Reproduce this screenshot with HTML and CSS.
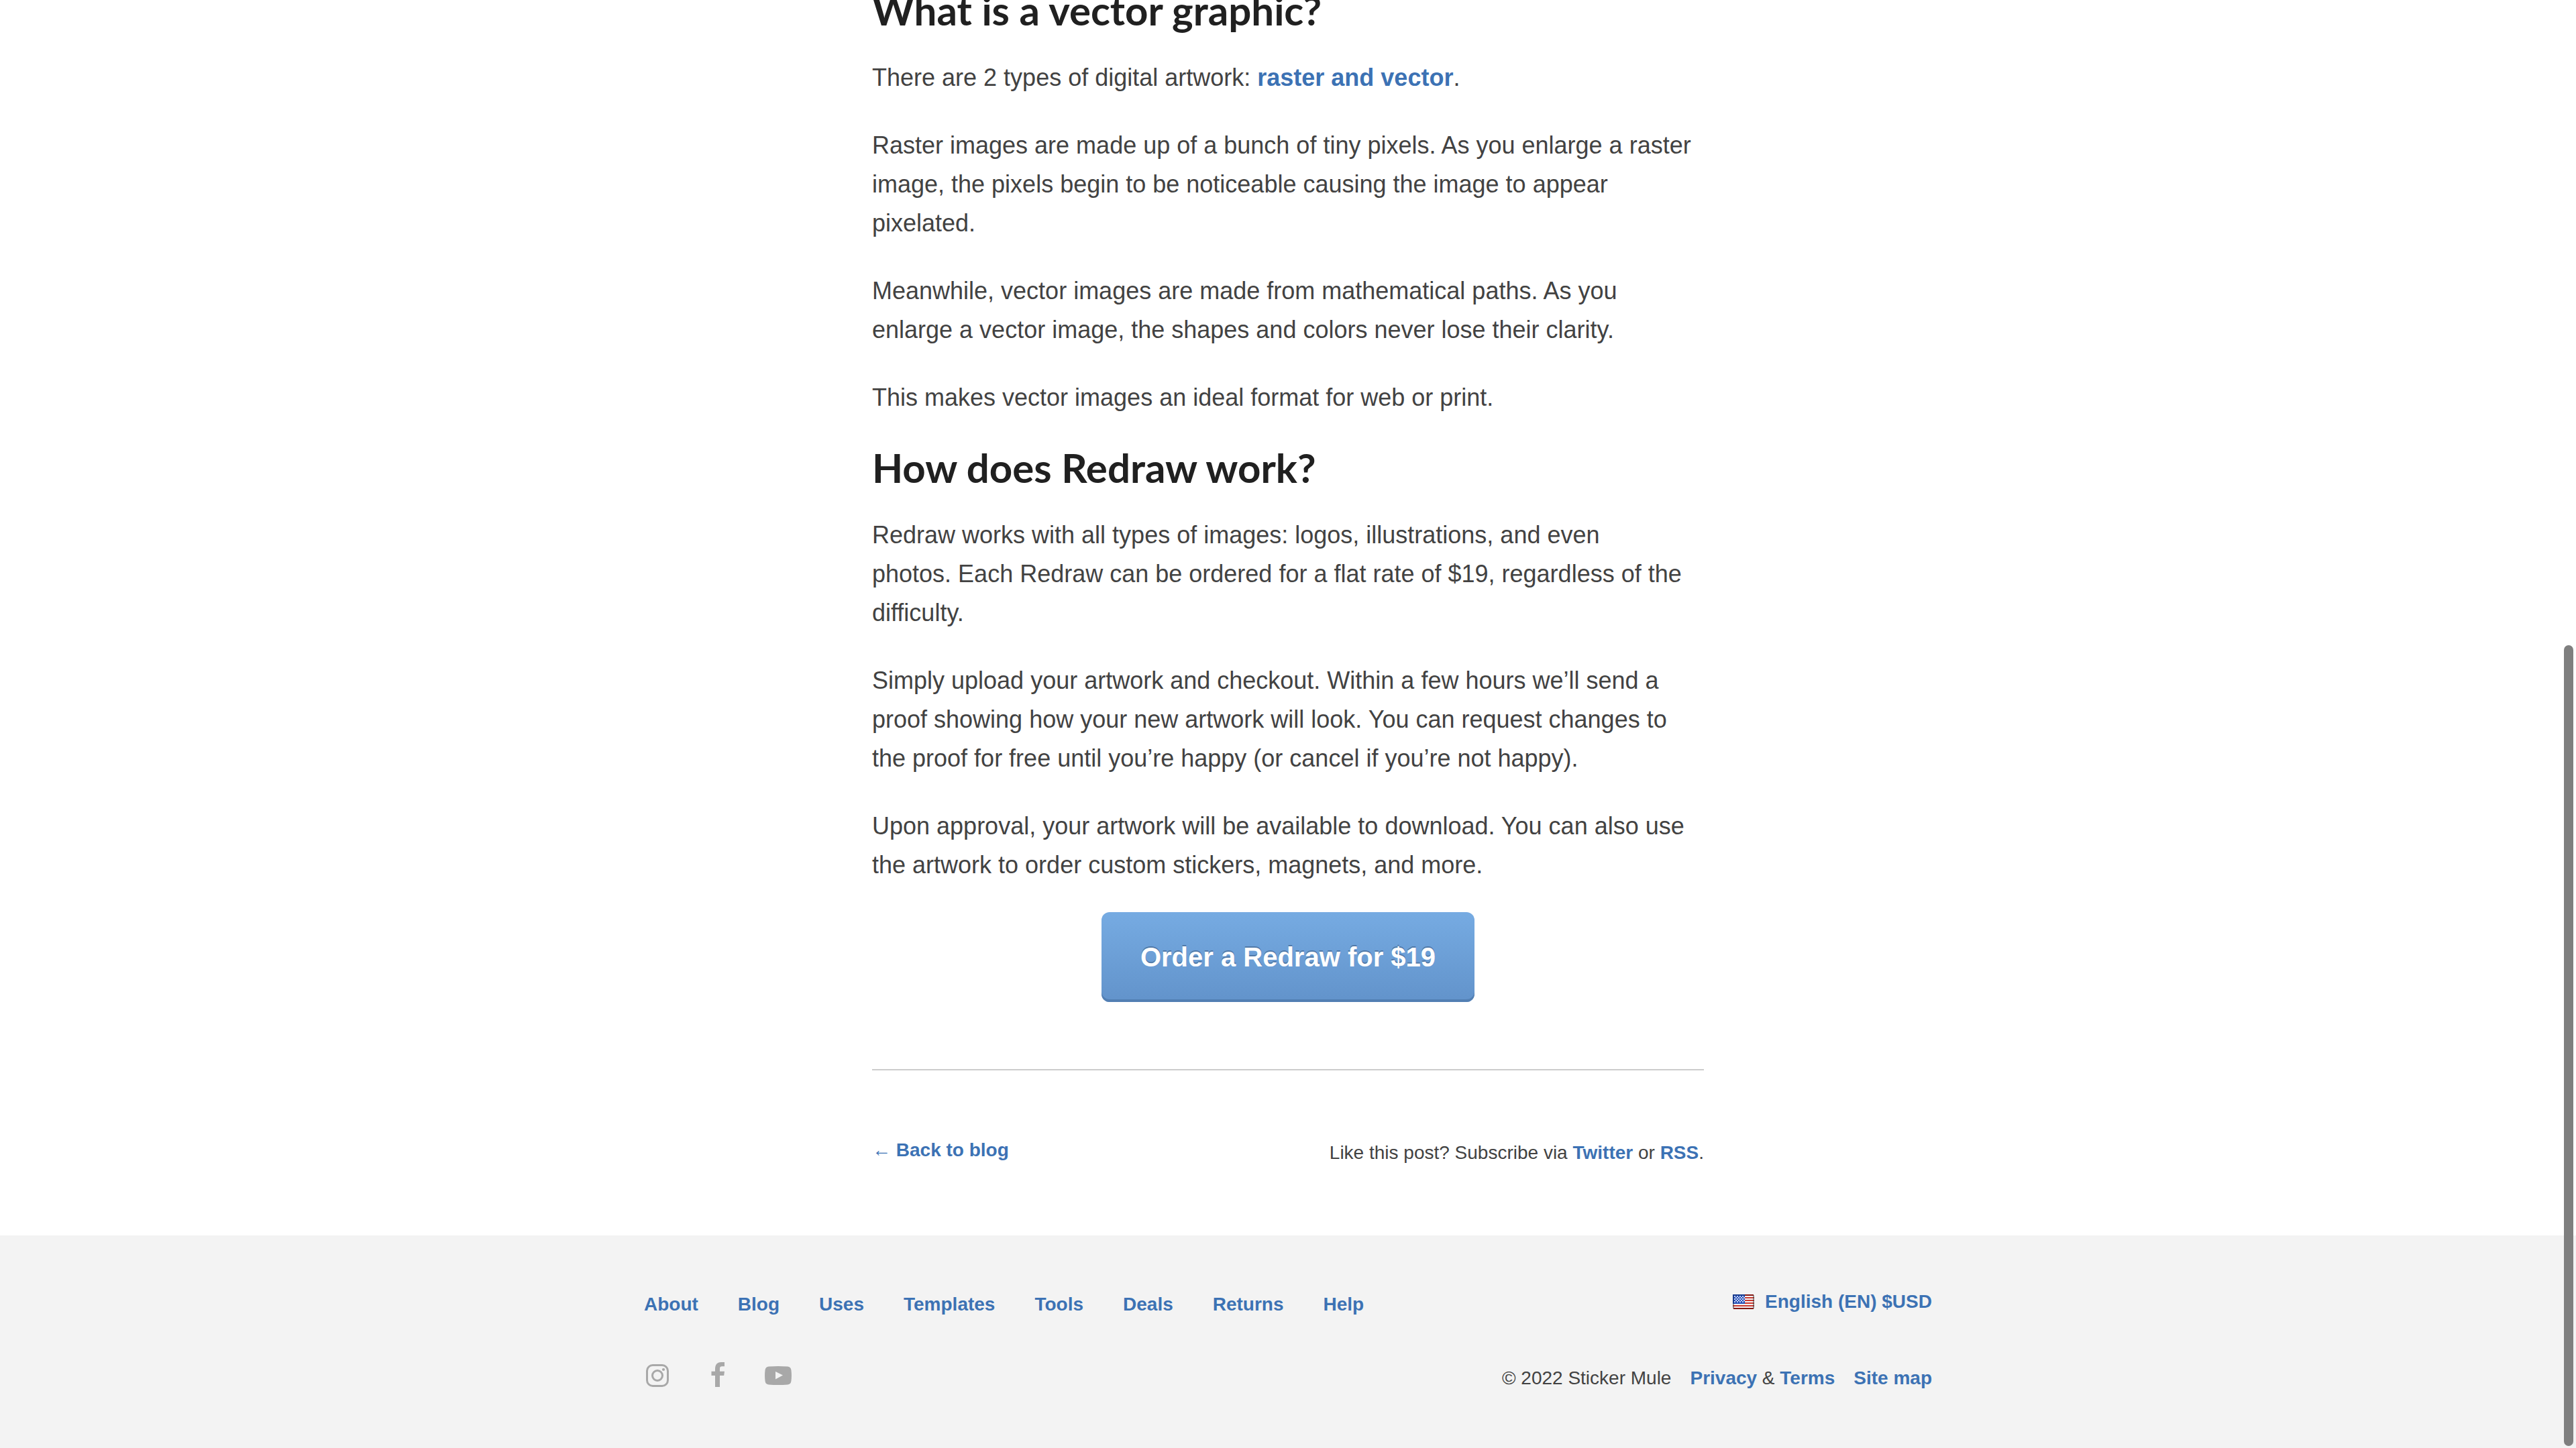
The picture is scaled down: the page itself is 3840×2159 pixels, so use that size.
FILE: index.html
```html
<!DOCTYPE html>
<html lang="en">
<head>
<meta charset="utf-8">
<meta name="viewport" content="width=device-width, initial-scale=1">
<title>What is a vector graphic? | Sticker Mule</title>
<link rel="stylesheet" href="styles.css">
</head>
<body>
<main class="article">
  <h2 class="heading">What is a vector graphic?</h2>
  <div class="prose">
    <p>There are 2 types of digital artwork: <a href="#">raster and vector</a>.</p>
    <p>Raster images are made up of a bunch of tiny pixels. As you enlarge a raster<br>image, the pixels begin to be noticeable causing the image to appear<br>pixelated.</p>
    <p>Meanwhile, vector images are made from mathematical paths. As you<br>enlarge a vector image, the shapes and colors never lose their clarity.</p>
    <p>This makes vector images an ideal format for web or print.</p>
  </div>
  <h2 class="heading">How does Redraw work?</h2>
  <div class="prose">
    <p>Redraw works with all types of images: logos, illustrations, and even<br>photos. Each Redraw can be ordered for a flat rate of $19, regardless of the<br>difficulty.</p>
    <p>Simply upload your artwork and checkout. Within a few hours we’ll send a<br>proof showing how your new artwork will look. You can request changes to<br>the proof for free until you’re happy (or cancel if you’re not happy).</p>
    <p>Upon approval, your artwork will be available to download. You can also use<br>the artwork to order custom stickers, magnets, and more.</p>
  </div>
  <button class="order" type="button">Order a Redraw for $19</button>
  <div class="article-end">
    <a class="back" href="#"><span class="arrow">←</span> Back to blog</a>
    <p class="subscribe">Like this post? Subscribe via <a href="#">Twitter</a> or <a href="#">RSS</a>.</p>
  </div>
</main>
<footer class="footer">
  <div class="footer-inner">
    <div class="footer-row">
      <nav class="links">
        <a href="#">About</a>
        <a href="#">Blog</a>
        <a href="#">Uses</a>
        <a href="#">Templates</a>
        <a href="#">Tools</a>
        <a href="#">Deals</a>
        <a href="#">Returns</a>
        <a href="#">Help</a>
      </nav>
      <button class="language" type="button">
        <svg class="flag" viewBox="0 0 32 22" aria-hidden="true">
          <rect width="32" height="22" rx="1" fill="#f4f2f4"/>
          <path d="M18 5h14M18 9h14M18 13h14M0 17h32" stroke="#cb3a2f" stroke-width="2"/>
          <rect width="18" height="14" fill="#2450b8"/>
          <path d="M2 3h16M4 5h14M2 7h16M4 9h14M2 11h16" stroke="#c5d0f0" stroke-width="2" stroke-dasharray="2 2"/>
          <path d="M1 1v20M31 1v20" stroke="#333" stroke-opacity=".5" stroke-width="2"/>
          <path d="M1 1h30M1 21h30" stroke="#831812" stroke-width="2"/>
          <path d="M1 14V1h17" fill="none" stroke="#173a8c" stroke-width="2"/>
        </svg>
        English (EN) $USD
      </button>
    </div>
    <div class="footer-row">
      <div class="social">
        <a href="#" aria-label="Instagram">
          <svg width="40" height="40" viewBox="0 0 40 40"><rect x="4.500" y="4.500" width="31" height="31" rx="8.500" fill="none" stroke="currentColor" stroke-width="3"/><circle cx="20" cy="20" r="7.500" fill="none" stroke="currentColor" stroke-width="3"/><circle cx="29" cy="11" r="2.100" fill="currentColor"/></svg>
        </a>
        <a href="#" aria-label="Facebook">
          <svg width="40" height="40" viewBox="0 0 40 40"><path d="M16 37V20h-5.500v-6.300H16V9.500C16 3.500 19.500 0 25 0h5v6.200h-3.500c-2.600 0-3.500 1.100-3.500 3.500v4h7L29.200 20H23v17z" fill="currentColor"/></svg>
        </a>
        <a href="#" aria-label="YouTube">
          <svg width="40" height="40" viewBox="0 0 40 40"><path fill-rule="evenodd" d="M6 6.500Q20 5.500 34 6.500 38.700 7 39.400 11.500 40.500 20 39.400 28.500 38.700 33 34 33.500 20 34.500 6 33.500 1.300 33 .6 28.500-.5 20 .6 11.500 1.300 7 6 6.500zM16 14v11.500L27 19.500z" fill="currentColor"/></svg>
        </a>
      </div>
      <div class="legal">
        <span>© 2022 Sticker Mule</span>
        <span><a href="#">Privacy</a> &amp; <a href="#">Terms</a></span>
        <a href="#">Site map</a>
      </div>
    </div>
  </div>
</footer>
<div class="scroll-thumb"></div>
</body>
</html>
```
FILE: styles.css
```css
* {
  box-sizing: border-box;
}

body {
  display: flex;
  flex-direction: column;
  min-height: 100vh;
  margin: 0;
  overflow: hidden;
  background: #fff;
  color: #424242;
  font: 28px/44px "Helvetica Neue", "Liberation Sans", Arial, sans-serif;
}

a {
  color: #3c72b4;
  font-weight: bold;
  text-decoration: none;
}

p,
h2 {
  margin: 0;
}

.article {
  display: flex;
  flex-direction: column;
  width: 100%;
  max-width: 1240px;
  margin: -23px auto 0;
}

.heading {
  margin-bottom: 34px;
  color: #202020;
  font: bold 60px/76px "Proxima Nova", Lato, sans-serif;
}

.prose {
  display: flex;
  flex-direction: column;
  gap: 43px;
  font-size: 36px;
  line-height: 58px;
  white-space: nowrap;
}

.prose + .heading {
  margin-top: 37px;
}

.order {
  align-self: center;
  width: 556px;
  height: 134px;
  margin-top: 41px;
  padding: 0;
  border: 0;
  border-radius: 12px;
  background: linear-gradient(#76abe2, #6293cb);
  box-shadow: inset 0 -4px #527fb3;
  color: #fff;
  font: bold 40px/60px "Helvetica Neue", "Liberation Sans", Arial, sans-serif;
  text-shadow: 0 -2px #5079a8;
}

.article-end {
  display: flex;
  justify-content: space-between;
  margin-top: 100px;
  padding: 97px 0 101px;
  border-top: 2px solid #ccc;
}

.arrow {
  font-weight: normal;
}

.subscribe {
  padding-top: 4px;
}

.footer {
  flex: 1;
  padding: 77px 0;
  background: #f3f3f3;
}

.footer-inner {
  display: flex;
  flex-direction: column;
  gap: 64px;
  max-width: 1920px;
  margin: 0 auto;
}

.footer-row {
  display: flex;
  align-items: flex-start;
  justify-content: space-between;
}

.links {
  display: flex;
  gap: 59px;
  padding-top: 4px;
}

.language {
  display: flex;
  align-items: center;
  gap: 16px;
  padding: 0;
  border: 0;
  background: none;
  color: #3c72b4;
  font: bold 28px/44px "Helvetica Neue", "Liberation Sans", Arial, sans-serif;
}

.flag {
  width: 32px;
  height: 22px;
}

.social {
  display: flex;
  gap: 50px;
}

.social a {
  display: flex;
  color: #a8a8a8;
}

.legal {
  display: flex;
  gap: 28px;
  padding-top: 2px;
}

.scroll-thumb {
  position: fixed;
  top: 962px;
  right: 4px;
  bottom: 3px;
  width: 14px;
  border-radius: 7px;
  background: #7f7f7f;
}
```
